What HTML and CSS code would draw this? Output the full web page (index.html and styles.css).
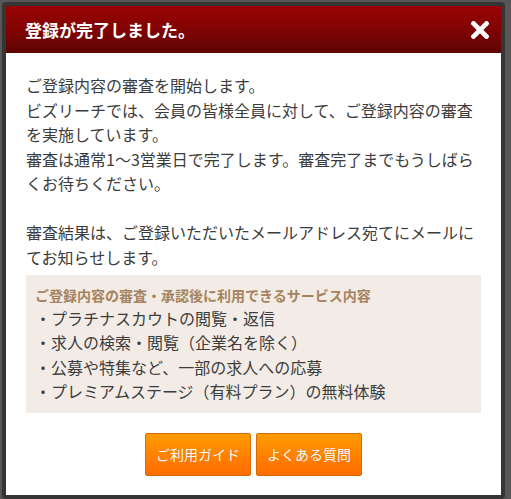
FILE: index.html
```html
<!DOCTYPE html>
<html lang="ja">
<head>
<meta charset="utf-8">
<title>登録が完了しました。</title>
<link rel="stylesheet" href="styles.css">
</head>
<body>
<div class="modal">
  <div class="modal-header">
    <h1 class="modal-title">登録が完了しました。</h1>
    <span class="close" aria-label="閉じる">
      <svg width="18" height="18" viewBox="0 0 18 18"><path d="M2.5 2.5 L15.5 15.5 M15.5 2.5 L2.5 15.5" stroke="#fff" stroke-width="4.6" stroke-linecap="square" fill="none"/></svg>
    </span>
  </div>
  <div class="modal-body">
    <p class="message">ご登録内容の審査を開始します。<br>ビズリーチでは、会員の皆様全員に対して、ご登録内容の審査を実施しています。<br>審査は通常1～3営業日で完了します。審査完了までもうしばらくお待ちください。<br><br>審査結果は、ご登録いただいたメールアドレス宛てにメールにてお知らせします。</p>
    <div class="services">
      <p class="services-title">ご登録内容の審査・承認後に利用できるサービス内容</p>
      <ul class="services-list">
        <li>・プラチナスカウトの閲覧・返信</li>
        <li>・求人の検索・閲覧（企業名を除く）</li>
        <li>・公募や特集など、一部の求人への応募</li>
        <li>・プレミアムステージ（有料プラン）の無料体験</li>
      </ul>
    </div>
    <div class="actions">
      <a class="btn" href="#">ご利用ガイド</a>
      <a class="btn" href="#">よくある質問</a>
    </div>
  </div>
</div>
</body>
</html>
```
FILE: styles.css
```css
html, body {
  margin: 0;
  padding: 0;
}
body {
  background: #575757;
  padding: 2px 6px 1px 2px;
  font-family: "Noto Sans CJK JP", "Noto Sans", sans-serif;
  color: #3a3a3a;
}
.modal {
  width: 495px;
  border: 4px solid #353535;
  border-radius: 4px;
  background: #fff;
}
.modal-header {
  height: 47px;
  background: linear-gradient(to bottom, #9b0303 0%, #810303 50%, #5e0404 100%);
  display: flex;
  align-items: center;
  justify-content: space-between;
  padding: 0 12px 0 19px;
}
.modal-title {
  margin: 0;
  color: #fff;
  font-size: 17px;
  font-weight: bold;
  line-height: 1;
  letter-spacing: 0;
}
.close {
  display: flex;
  width: 18px;
  height: 18px;
  margin-top: 1px;
}
.modal-body {
  padding: 20px 20px 19px 20px;
}
.message {
  margin: 0;
  font-size: 16px;
  line-height: 24.5px;
  color: #3c3c3c;
}
.services {
  margin-top: 6px;
  background: #f3ece6;
  padding: 10px 9px 10px 9px;
}
.services-title {
  margin: 0;
  color: #a5835f;
  font-size: 14px;
  font-weight: bold;
  line-height: 21px;
}
.services-list {
  margin: 0;
  padding: 0;
  list-style: none;
  font-size: 16px;
  line-height: 24.3px;
  color: #3c3c3c;
}
.actions {
  margin-top: 20px;
  display: flex;
  justify-content: center;
  gap: 5px;
}
.btn {
  display: block;
  padding: 0 10px;
  height: 41px;
  line-height: 41px;
  font-size: 14px;
  color: #fff;
  text-decoration: none;
  border: 1px solid #d96a00;
  border-radius: 2px;
  background: linear-gradient(to bottom, #ff9c00 0%, #ff8300 50%, #ff6c00 100%);
  text-shadow: 0 0 1px rgba(150, 60, 0, 0.4);
}
```
